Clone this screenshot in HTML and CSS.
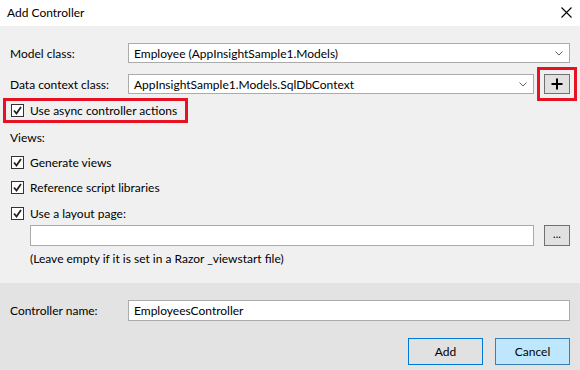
FILE: index.html
```html
<!DOCTYPE html>
<html lang="en">
<head>
    <meta charset="UTF-8">
    <title>Add Controller</title>
    <link rel="stylesheet" href="styles.css">
</head>
<body>

<div class="dialog">
    <div class="titlebar">
        <span class="title">Add Controller</span>
        <svg class="close" width="11" height="11" viewBox="0 0 11 11">
            <path d="M0.5 0.5 L10.5 10.5 M10.5 0.5 L0.5 10.5" stroke="#000" stroke-width="1.1" fill="none"/>
        </svg>
    </div>

    <div class="main">
        <div class="row">
            <label class="row-label">Model class:</label>
            <div class="combo">
                <span>Employee (AppInsightSample1.Models)</span>
                <svg class="chevron" width="8" height="5" viewBox="0 0 8 5"><path d="M0.5 0.5 L4 4 L7.5 0.5" stroke="#606060" fill="none"/></svg>
            </div>
        </div>

        <div class="row row-data">
            <label class="row-label">Data context class:</label>
            <div class="combo">
                <span>AppInsightSample1.Models.SqlDbContext</span>
                <svg class="chevron" width="8" height="5" viewBox="0 0 8 5"><path d="M0.5 0.5 L4 4 L7.5 0.5" stroke="#606060" fill="none"/></svg>
            </div>
            <button class="small-btn plus highlight">
                <svg width="12" height="12" viewBox="0 0 12 12"><path d="M6 0.5 V11.5 M0.5 6 H11.5" stroke="#000" stroke-width="2" fill="none"/></svg>
            </button>
        </div>

        <label class="check async highlight">
            <span class="box"><svg width="11" height="11" viewBox="0 0 11 11"><path d="M2 5.5 L4.5 8.5 L9 2" stroke="#222" stroke-width="1.8" fill="none"/></svg></span>
            Use async controller actions
        </label>

        <div class="views-label">Views:</div>

        <label class="check gen">
            <span class="box"><svg width="11" height="11" viewBox="0 0 11 11"><path d="M2 5.5 L4.5 8.5 L9 2" stroke="#222" stroke-width="1.8" fill="none"/></svg></span>
            Generate views
        </label>
        <label class="check ref">
            <span class="box"><svg width="11" height="11" viewBox="0 0 11 11"><path d="M2 5.5 L4.5 8.5 L9 2" stroke="#222" stroke-width="1.8" fill="none"/></svg></span>
            Reference script libraries
        </label>
        <label class="check layout">
            <span class="box"><svg width="11" height="11" viewBox="0 0 11 11"><path d="M2 5.5 L4.5 8.5 L9 2" stroke="#222" stroke-width="1.8" fill="none"/></svg></span>
            Use a layout page:
        </label>

        <div class="layout-row">
            <div class="textbox"></div>
            <button class="small-btn dots">...</button>
        </div>
        <div class="hint">(Leave empty if it is set in a Razor _viewstart file)</div>
    </div>

    <div class="footer">
        <div class="row">
            <label class="row-label">Controller name:</label>
            <div class="textbox name">EmployeesController</div>
        </div>
        <div class="actions">
            <button class="btn btn-add">Add</button>
            <button class="btn btn-cancel">Cancel</button>
        </div>
    </div>
</div>

</body>
</html>
```

FILE: styles.css
```css
body {
    margin: 0;
    font-family: Lato, "Noto Sans", sans-serif;
    font-size: 12px;
    color: #000;
    background-color: #f0f0f0;
}
.dialog {
    width: 580px;
    height: 370px;
    display: flex;
    flex-direction: column;
    overflow: hidden;
}
.titlebar {
    height: 26px;
    background-color: #fff;
    display: flex;
    justify-content: space-between;
    align-items: center;
    padding: 0 7px 2px 7px;
    box-sizing: border-box;
}
.close {
    margin-right: 1px;
}
.main {
    background-color: #f0f0f0;
    padding: 17px 10px 16px 10px;
    display: flex;
    flex-direction: column;
}
.row {
    display: flex;
    align-items: center;
    height: 20px;
}
.row-data {
    margin-top: 11px;
}
.row-label {
    width: 118px;
    flex: none;
}
.combo, .textbox {
    flex: 1;
    height: 20px;
    box-sizing: border-box;
    border: 1px solid #ababab;
    background-color: #fff;
    display: flex;
    align-items: center;
    justify-content: space-between;
    padding: 0 6px 0 5px;
}
.chevron {
    margin-top: 1px;
}
.small-btn {
    width: 26px;
    height: 20px;
    margin-left: 10px;
    padding: 0;
    border: 1px solid #707070;
    background-color: #e1e1e1;
    display: flex;
    align-items: center;
    justify-content: center;
    font-family: inherit;
    font-size: 11px;
}
.highlight {
    outline: 3px solid #e81123;
    outline-offset: 4px;
}
.check {
    display: flex;
    align-items: center;
    height: 16px;
    padding-left: 1px;
}
.check .box {
    width: 13px;
    height: 13px;
    box-sizing: border-box;
    border: 1px solid #333;
    background-color: #fff;
    display: flex;
    align-items: center;
    justify-content: center;
    margin-right: 6px;
}
.async {
    align-self: flex-start;
    height: 19px;
    margin-top: 7px;
    margin-left: -4px;
    padding: 0 8px 0 5px;
    outline-offset: 0;
}
.views-label {
    margin-top: 10px;
    line-height: 16px;
}
.gen {
    margin-top: 8px;
}
.ref {
    margin-top: 9px;
}
.layout {
    margin-top: 10px;
}
.layout-row {
    display: flex;
    margin-top: 4px;
    padding-left: 20px;
    height: 21px;
}
.layout-row .textbox {
    height: 21px;
}
.dots {
    height: 21px;
    padding-bottom: 4px;
}
.hint {
    margin-top: 5px;
    padding-left: 20px;
    line-height: 16px;
}
.footer {
    flex: 1;
    background-color: #e3e3e3;
    padding: 17px 10px 0 10px;
}
.textbox.name {
    height: 21px;
    justify-content: flex-start;
}
.footer .row {
    height: 21px;
}
.actions {
    display: flex;
    justify-content: flex-end;
    gap: 12px;
    margin-top: 17px;
}
.btn {
    width: 75px;
    height: 27px;
    font-family: inherit;
    font-size: 12px;
    color: #000;
    padding: 0;
}
.btn-add {
    background-color: #e1e1e1;
    border: 1px solid #0078d7;
}
.btn-cancel {
    background-color: #bee6fd;
    border: 1px solid #3c7fb1;
}
```
